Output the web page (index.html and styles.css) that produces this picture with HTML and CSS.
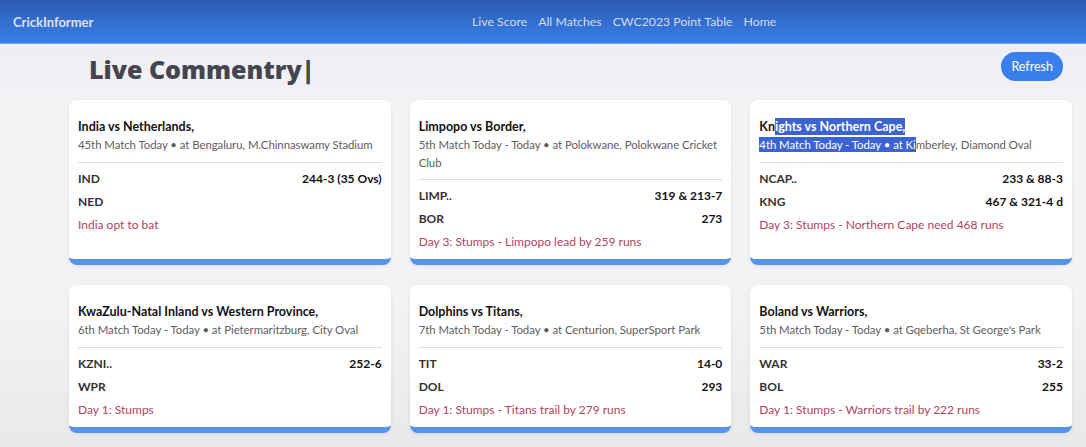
FILE: index.html
```html
<!DOCTYPE html>
<html>
<head>
<meta charset="utf-8">
<link rel="stylesheet" href="styles.css">
</head>
<body>
<nav class="navbar">
  <a class="brand">CrickInformer</a>
  <ul class="nav-links">
    <li>Live Score</li>
    <li>All Matches</li>
    <li>CWC2023 Point Table</li>
    <li>Home</li>
  </ul>
</nav>
<main class="page">
  <div class="head">
    <h1 class="title">Live Commentry|</h1>
    <button class="refresh">Refresh</button>
  </div>
  <div class="grid">
    <div class="card">
      <div class="card-body">
        <div class="match">India vs Netherlands,</div>
        <div class="info">45th Match Today • at Bengaluru, M.Chinnaswamy Stadium</div>
        <hr>
        <div class="row"><span class="team">IND</span><span class="score">244-3 (35 Ovs)</span></div>
        <div class="row"><span class="team">NED</span><span class="score"></span></div>
        <div class="status">India opt to bat</div>
      </div>
    </div>
    <div class="card">
      <div class="card-body">
        <div class="match">Limpopo vs Border,</div>
        <div class="info">5th Match Today - Today • at Polokwane, Polokwane Cricket Club</div>
        <hr>
        <div class="row"><span class="team">LIMP..</span><span class="score">319 &amp; 213-7</span></div>
        <div class="row"><span class="team">BOR</span><span class="score">273</span></div>
        <div class="status">Day 3: Stumps - Limpopo lead by 259 runs</div>
      </div>
    </div>
    <div class="card">
      <div class="card-body">
        <div class="match">Kn<span class="sel">ights vs Northern Cape,</span></div>
        <div class="info"><span class="sel">4th Match Today - Today • at Ki</span>mberley, Diamond Oval</div>
        <hr>
        <div class="row"><span class="team">NCAP..</span><span class="score">233 &amp; 88-3</span></div>
        <div class="row"><span class="team">KNG</span><span class="score">467 &amp; 321-4 d</span></div>
        <div class="status">Day 3: Stumps - Northern Cape need 468 runs</div>
      </div>
    </div>
    <div class="card">
      <div class="card-body">
        <div class="match">KwaZulu-Natal Inland vs Western Province,</div>
        <div class="info">6th Match Today - Today • at Pietermaritzburg, City Oval</div>
        <hr>
        <div class="row"><span class="team">KZNI..</span><span class="score">252-6</span></div>
        <div class="row"><span class="team">WPR</span><span class="score"></span></div>
        <div class="status">Day 1: Stumps</div>
      </div>
    </div>
    <div class="card">
      <div class="card-body">
        <div class="match">Dolphins vs Titans,</div>
        <div class="info">7th Match Today - Today • at Centurion, SuperSport Park</div>
        <hr>
        <div class="row"><span class="team">TIT</span><span class="score">14-0</span></div>
        <div class="row"><span class="team">DOL</span><span class="score">293</span></div>
        <div class="status">Day 1: Stumps - Titans trail by 279 runs</div>
      </div>
    </div>
    <div class="card">
      <div class="card-body">
        <div class="match">Boland vs Warriors,</div>
        <div class="info">5th Match Today - Today • at Gqeberha, St George's Park</div>
        <hr>
        <div class="row"><span class="team">WAR</span><span class="score">33-2</span></div>
        <div class="row"><span class="team">BOL</span><span class="score">255</span></div>
        <div class="status">Day 1: Stumps - Warriors trail by 222 runs</div>
      </div>
    </div>
  </div>
</main>
</body>
</html>
```
FILE: styles.css
```css
* { box-sizing: border-box; }
html, body { margin: 0; padding: 0; }
body {
  font-family: Lato, "Open Sans", sans-serif;
  background: linear-gradient(#ebebf0, #f4f4f7 120px, #f3f3f6 300px, #e9e9ec);
  min-height: 447px;
  overflow: hidden;
}
.navbar {
  height: 44px;
  background: linear-gradient(#2c5cb5, #3a7fe7);
  display: flex;
  align-items: center;
  padding: 0 13px;
  border-bottom: 1px solid #6a9eea;
}
.brand {
  color: #dce2ed;
  font-size: 13px;
  font-weight: 700;
  width: 459px;
}
.nav-links {
  list-style: none;
  margin: 0;
  padding: 0;
  display: flex;
  gap: 11px;
}
.nav-links li {
  color: #d3dcec;
  font-size: 12.3px;
}
.page { padding: 0 14px 0 69px; }
.head {
  display: flex;
  justify-content: space-between;
  align-items: flex-start;
  padding: 0 9px 0 20px;
  height: 56px;
}
.title {
  margin: 8px 0 0;
  line-height: 34px;
  font-family: "Open Sans", sans-serif;
  font-size: 25px;
  font-weight: 800;
  color: #44454f;
}
.refresh {
  margin-top: 8px;
  background: #3a80ec;
  color: #fff;
  border: none;
  border-radius: 15px;
  height: 29px;
  padding: 0 10px;
  font-family: inherit;
  font-size: 12.5px;
}
.grid {
  display: grid;
  grid-template-columns: repeat(3, 1fr);
  column-gap: 19px;
  row-gap: 20px;
  width: 1003px;
}
.card {
  background: #fff;
  border-radius: 8px;
  border-bottom: 6px solid #5393ea;
  box-shadow: 0 1px 4px rgba(0,0,0,0.08);
}
.card-body { padding: 18px 9px 6px; }
.match {
  font-size: 12.5px;
  font-weight: 700;
  color: #111;
  line-height: 18px;
}
.info {
  font-size: 11.4px;
  letter-spacing: -0.05px;
  color: #5e5e5e;
  line-height: 17.5px;
}
.sel { background: #3b63d1; color: #fff; padding: 1px 0; }
hr {
  border: none;
  border-top: 1px solid #dedede;
  margin: 8px 0 4px;
}
.row {
  display: flex;
  justify-content: space-between;
  font-size: 12px;
  font-weight: 700;
  line-height: 23px;
}
.team { color: #333; }
.score { color: #111; }
.status {
  color: #b2435d;
  font-size: 12px;
  line-height: 23px;
}
```
